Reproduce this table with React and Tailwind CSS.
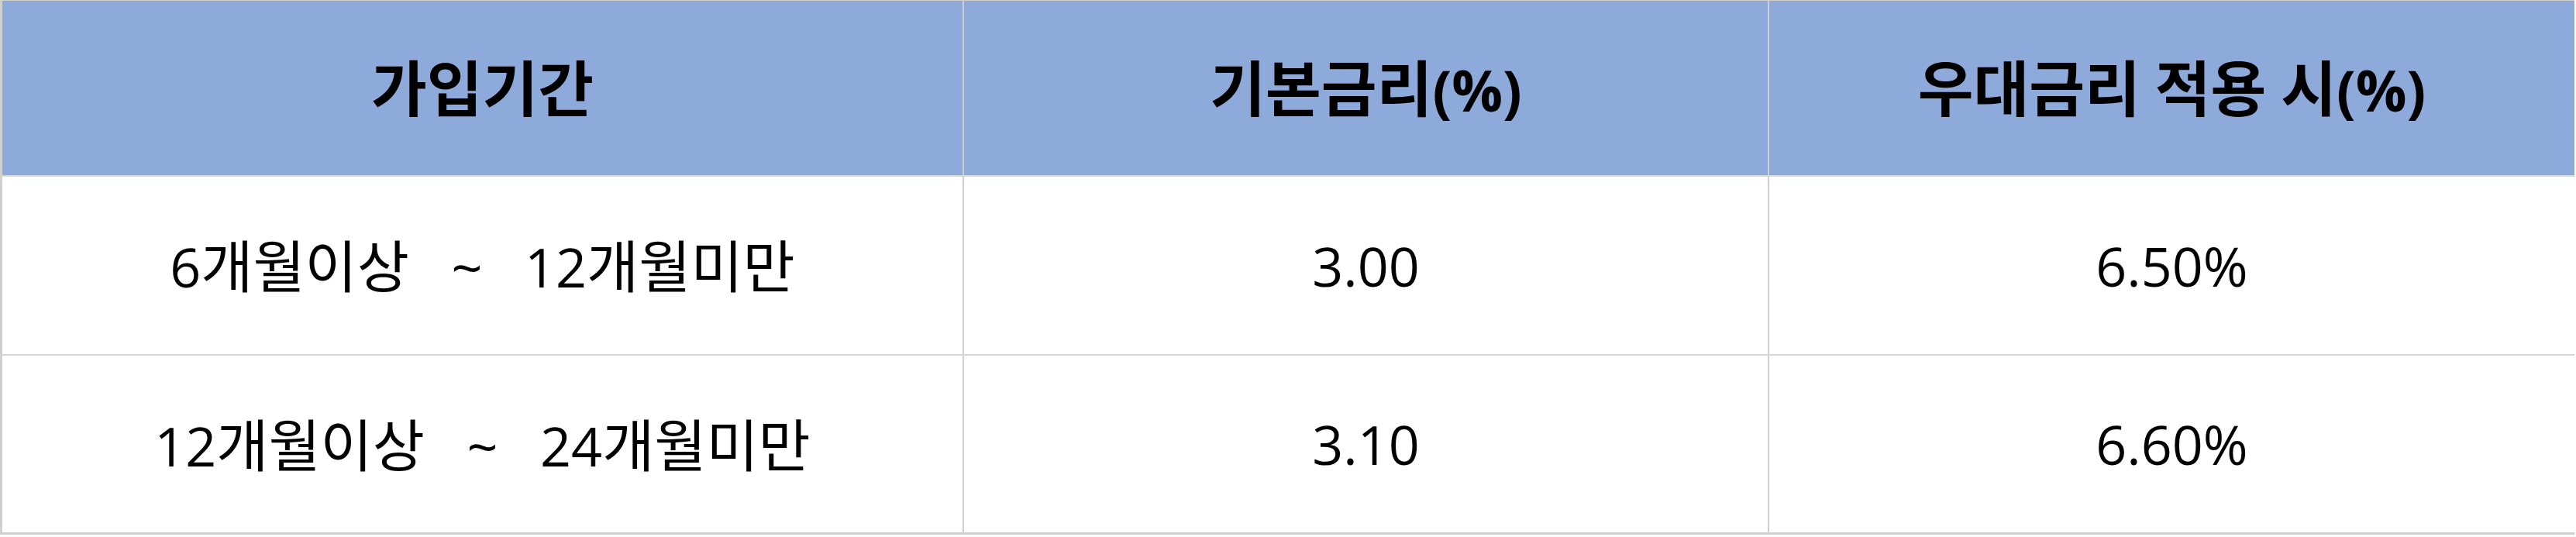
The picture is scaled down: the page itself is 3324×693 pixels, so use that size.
function Mixed({ text, hangulClass, latinClass }) {
  const parts = text.match(/[\uac00-\ud7a3]+|[^\uac00-\ud7a3]+/g) || [];
  return (
    <span className="whitespace-pre leading-none">
      {parts.map((p, i) =>
        /[\uac00-\ud7a3]/.test(p) ? (
          <span key={i} className={hangulClass}>
            {p}
          </span>
        ) : (
          <span key={i} className={latinClass}>
            {p}
          </span>
        )
      )}
    </span>
  );
}

export default function App() {
  const font = { fontFamily: '"Open Sans", "Noto Sans CJK KR", sans-serif' };
  const head = ["가입기간", "기본금리(%)", "우대금리 적용 시(%)"];
  const rows = [
    ["6개월이상   ~   12개월미만", "3.00", "6.50%"],
    ["12개월이상   ~   24개월미만", "3.10", "6.60%"],
  ];
  const hH = "text-[78px]";
  const hL = "text-[73px]";
  const bH = "text-[73px]";
  const bL = "text-[70px]";
  return (
    <div className="w-[3324px] h-[693px] bg-white text-black" style={font}>
      <div className="w-[3322px] border-l-[3px] border-t border-b-[3px] border-[#d0d0d0]">
        <div className="grid grid-cols-[1239px_2px_1037px_2px_1039px] h-[225px] bg-[#8eaadb] font-bold">
          <div className="flex items-center justify-center">
            <Mixed text={head[0]} hangulClass={hH} latinClass={hL} />
          </div>
          <div className="bg-[#d0d0d0]" />
          <div className="flex items-center justify-center">
            <Mixed text={head[1]} hangulClass={hH} latinClass={hL} />
          </div>
          <div className="bg-[#d0d0d0]" />
          <div className="flex items-center justify-center">
            <Mixed text={head[2]} hangulClass={hH} latinClass={hL} />
          </div>
        </div>
        <div className="h-[2px] bg-[#d6d6d6]" />
        {rows.map((r, i) => (
          <div key={i}>
            <div
              className={
                "grid grid-cols-[1239px_2px_1037px_2px_1039px] " +
                (i === 0 ? "h-[229px]" : "h-[228px]")
              }
            >
              <div className="flex items-center justify-center">
                <Mixed text={r[0]} hangulClass={bH} latinClass={bL} />
              </div>
              <div className="bg-[#d0d0d0]" />
              <div className="flex items-center justify-center">
                <Mixed text={r[1]} hangulClass={bH} latinClass={bL} />
              </div>
              <div className="bg-[#d0d0d0]" />
              <div className="flex items-center justify-center">
                <Mixed text={r[2]} hangulClass={bH} latinClass={bL} />
              </div>
            </div>
            {i === 0 && <div className="h-[2px] bg-[#d6d6d6]" />}
          </div>
        ))}
      </div>
    </div>
  );
}
